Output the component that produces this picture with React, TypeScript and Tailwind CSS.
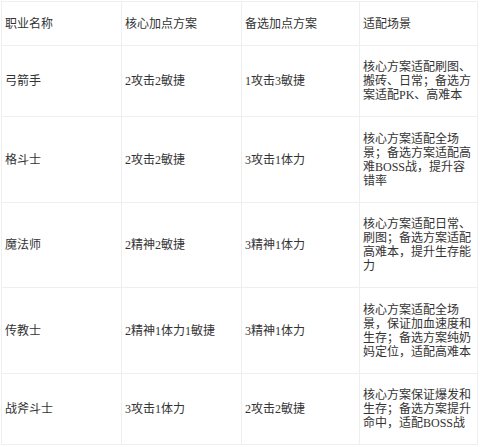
const ROWS = [
  ["弓箭手", "2攻击2敏捷", "1攻击3敏捷", "核心方案适配刷图、搬砖、日常；备选方案适配PK、高难本"],
  ["格斗士", "2攻击2敏捷", "3攻击1体力", "核心方案适配全场景；备选方案适配高难BOSS战，提升容错率"],
  ["魔法师", "2精神2敏捷", "3精神1体力", "核心方案适配日常、刷图；备选方案适配高难本，提升生存能力"],
  ["传教士", "2精神1体力1敏捷", "3精神1体力", "核心方案适配全场景，保证加血速度和生存；备选方案纯奶妈定位，适配高难本"],
  ["战斧斗士", "3攻击1体力", "2攻击2敏捷", "核心方案保证爆发和生存；备选方案提升命中，适配BOSS战"],
];

const HEAD = ["职业名称", "核心加点方案", "备选加点方案", "适配场景"];

const cell = "border border-[#efefef] pl-[3px] pr-[3px] pt-[14.5px] pb-[14px] align-middle text-left font-normal";

export default function App() {
  return (
    <div className="bg-white min-h-[447px] pt-px pl-px text-[#333] text-[12px] leading-[14px] [font-family:'Liberation_Serif','Noto_Sans_CJK_SC',serif]">
      <table className="border-collapse w-[476px] table-fixed">
        <colgroup>
          <col className="w-[120px]" />
          <col className="w-[120px]" />
          <col className="w-[118px]" />
          <col className="w-[118px]" />
        </colgroup>
        <thead>
          <tr>
            {HEAD.map((h) => (
              <th key={h} className={cell}>
                {h}
              </th>
            ))}
          </tr>
        </thead>
        <tbody>
          {ROWS.map((r) => (
            <tr key={r[0]}>
              {r.map((c, i) => (
                <td key={i} className={cell}>
                  {c}
                </td>
              ))}
            </tr>
          ))}
        </tbody>
      </table>
    </div>
  );
}
